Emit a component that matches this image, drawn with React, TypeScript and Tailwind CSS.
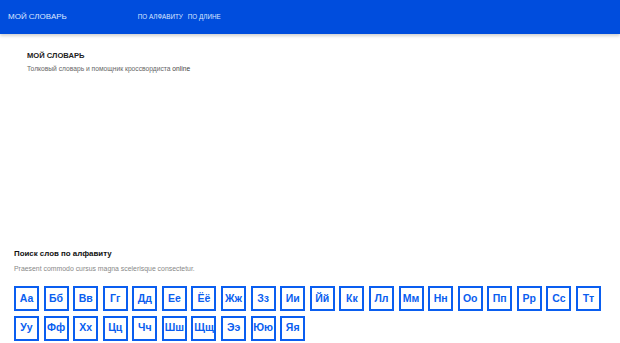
const LETTERS = [
  "Аа", "Бб", "Вв", "Гг", "Дд", "Ее", "Ёё", "Жж", "Зз", "Ии",
  "Йй", "Кк", "Лл", "Мм", "Нн", "Оо", "Пп", "Рр", "Сс", "Тт",
  "Уу", "Фф", "Хх", "Цц", "Чч", "Шш", "Щщ", "Ээ", "Юю", "Яя",
];

const App = () => {
  return (
    <div className="w-[620px] h-[343px] overflow-hidden bg-white font-['Liberation_Sans',Arial,sans-serif]">
      <header className="h-[34px] bg-[#004ddd] shadow-[0_2px_3px_rgba(0,0,0,0.18)] flex items-center relative z-10">
        <a className="ml-[8px] text-[8px] text-[#dce6ff] leading-none">МОЙ СЛОВАРЬ</a>
        <nav className="ml-[71px] flex gap-[5px] text-[6.3px] text-[#dce6ff] leading-none">
          <a>ПО АЛФАВИТУ</a>
          <a>ПО ДЛИНЕ</a>
        </nav>
      </header>

      <section className="pl-[27px] pt-[18px]">
        <h1 className="text-[7.6px] font-bold text-[#222] leading-none">МОЙ СЛОВАРЬ</h1>
        <p className="mt-[6px] text-[6.7px] text-[#666] leading-none">
          Толковый словарь и помощник кроссвордиста <span className="text-[#444]">online</span>
        </p>
      </section>

      <section className="pl-[14px] pt-[178px]">
        <h2 className="text-[7.9px] font-bold text-[#111] leading-none">Поиск слов по алфавиту</h2>
        <p className="mt-[8px] text-[6.9px] text-[#888] leading-none">
          Praesent commodo cursus magna scelerisque consectetur.
        </p>
        <div className="mt-[13px] flex flex-wrap w-[600px] gap-x-[4.58px] gap-y-[4.5px]">
          {LETTERS.map((l) => (
            <a
              key={l}
              className="w-[25px] h-[25px] border-2 border-[#0a5ef0] flex items-center justify-center text-[10.5px] font-bold text-[#0a5ef0]"
            >
              {l}
            </a>
          ))}
        </div>
      </section>
    </div>
  );
};

export default App;
